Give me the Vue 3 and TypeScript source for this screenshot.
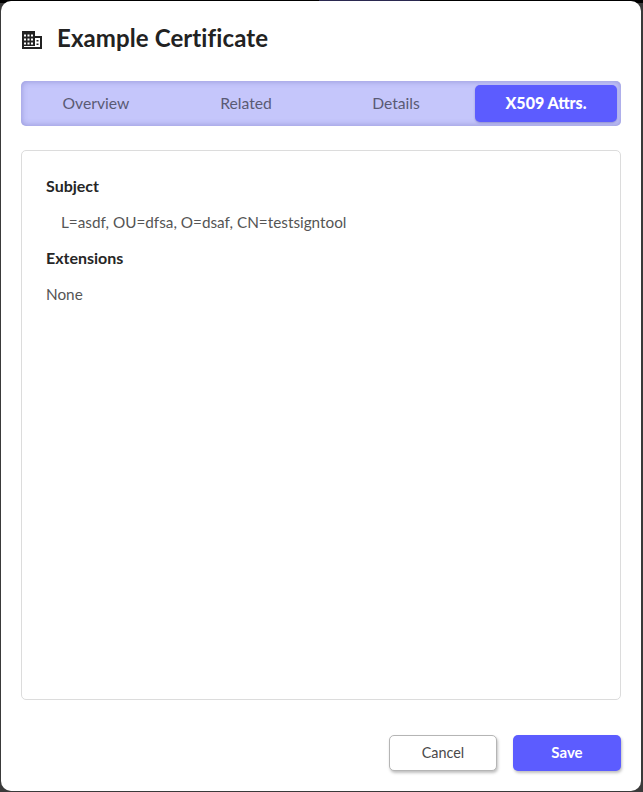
<script setup lang="ts">
const tabs = ['Overview', 'Related', 'Details', 'X509 Attrs.']
const activeTab = 'X509 Attrs.'
</script>

<template>
  <div class="backdrop">
    <div class="modal">
      <header class="modal-header">
        <svg class="header-icon" width="20" height="18" viewBox="0 0 20 18" aria-hidden="true">
          <path
            fill="#222"
            fill-rule="evenodd"
            d="M0 0h13v5h7v13H0V0zm2 3.500v2h2v-2H2zm3.500 0v2h2v-2h-2zm3.500 0v2h2v-2H9zM2 7.500v2h2v-2H2zm3.500 0v2h2v-2h-2zm3.500 0v2h2v-2H9zM2 11.500v2h2v-2H2zm3.500 0v2h2v-2h-2zm3.500 0v2h2v-2H9zM13 7v9h5V7h-5zM2 15v1h11v-1H2z"
          />
          <path fill="#222" d="M14.500 9h2v1.500h-2zM14.500 12.500h2V14h-2z" />
        </svg>
        <h1 class="modal-title">Example Certificate</h1>
      </header>

      <nav class="tabs">
        <button
          v-for="tab in tabs"
          :key="tab"
          :class="['tab', tab === activeTab ? 'active' : '']"
          type="button"
        >
          {{ tab }}
        </button>
      </nav>

      <section class="panel">
        <h2 class="label">Subject</h2>
        <p class="value indented">L=asdf, OU=dfsa, O=dsaf, CN=testsigntool</p>
        <h2 class="label">Extensions</h2>
        <p class="value">None</p>
      </section>

      <footer class="actions">
        <button class="btn cancel" type="button">Cancel</button>
        <button class="btn save" type="button">Save</button>
      </footer>
    </div>
  </div>
</template>

<style>
html,
body {
  margin: 0;
  background: #333;
}
</style>

<style scoped>
.backdrop {
  width: 643px;
  height: 792px;
  box-sizing: border-box;
  padding: 1px 2px 1px 1px;
  background:
    linear-gradient(90deg, #000 319px, #2a2850 319px, #2a2850 420px, #000 420px) top / 100% 3px no-repeat,
    #3a3a3a;
  overflow: hidden;
}

.modal {
  height: 100%;
  box-sizing: border-box;
  display: flex;
  flex-direction: column;
  padding: 0 20px 20px;
  background: #fff;
  border-radius: 10px;
  font-family: 'Lato', 'Open Sans', sans-serif;
  color: #555;
}

.modal-header {
  display: flex;
  align-items: center;
  gap: 15px;
  height: 80px;
  padding: 0 0 4px 1px;
  box-sizing: border-box;
}

.header-icon {
  flex: none;
  margin-top: 2px;
}

.modal-title {
  margin: 0 0 4px;
  font-size: 24px;
  font-weight: 700;
  letter-spacing: 0.1px;
  color: #222;
}

.tabs {
  display: grid;
  grid-template-columns: repeat(4, 1fr);
  gap: 8px;
  height: 45px;
  box-sizing: border-box;
  padding: 4px;
  background: #c5c6fb;
  border-radius: 5px;
  box-shadow: inset 0 0 6px rgba(80, 80, 170, 0.45);
}

.tab {
  border: 0;
  padding: 0 0 2px;
  border-radius: 5px;
  background: transparent;
  font-family: inherit;
  font-size: 15.700px;
  color: #5a5a74;
}

.tab.active {
  background: #5c5cff;
  color: #fff;
  font-size: 16px;
  font-weight: 900;
  box-shadow: 0 1px 2px rgba(40, 40, 120, 0.3);
}

.panel {
  flex: 1;
  margin-top: 24px;
  padding: 23px 24px;
  border: 1px solid #dcdcdc;
  border-radius: 5px;
}

.label {
  margin: 0;
  font-size: 16px;
  line-height: 24px;
  font-weight: 700;
  color: #262626;
}

.value {
  margin: 12px 0;
  font-size: 15.300px;
  line-height: 24px;
}

.indented {
  padding-left: 15px;
}

.actions {
  display: flex;
  justify-content: flex-end;
  gap: 16px;
  margin-top: 35px;
}

.btn {
  width: 108px;
  height: 36px;
  padding: 0 0 2px;
  border-radius: 5px;
  font-family: inherit;
  font-size: 14.400px;
  box-sizing: border-box;
  box-shadow: 1px 2px 3px rgba(0, 0, 0, 0.25);
}

.cancel {
  background: #fff;
  border: 1px solid #b5b5b5;
  color: #4a4a4a;
}

.save {
  background: #5c5cff;
  border: 0;
  color: #fff;
  font-size: 15px;
  font-weight: 700;
}
</style>
